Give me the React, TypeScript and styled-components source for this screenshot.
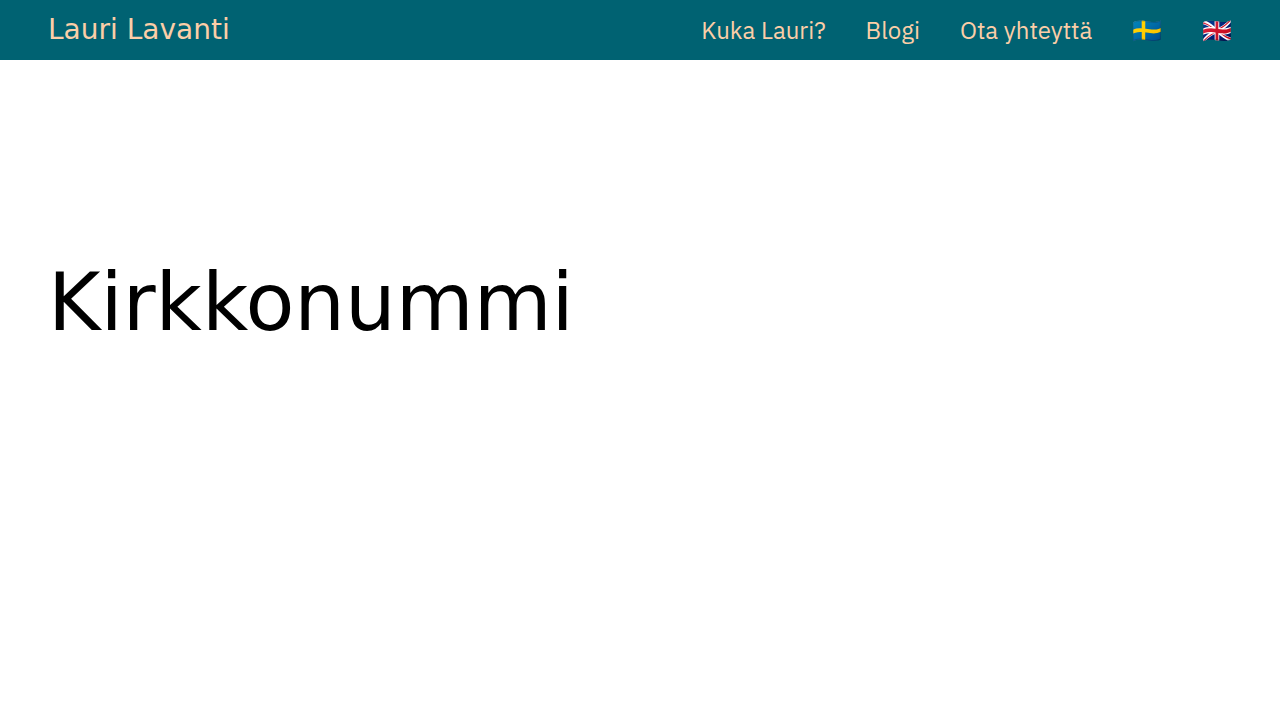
import React from "react";
import styled, { createGlobalStyle } from "styled-components";

const GlobalStyle = createGlobalStyle`
  body { margin: 0; background: #fff; color: #000; }
`;
const Header = styled.header`
  display: flex;
  align-items: center;
  justify-content: space-between;
  height: 60px;
  padding: 0 48px;
  background: #006272;
`;
const Brand = styled.a`
  color: #fbcea8;
  font: 28px/60px "DejaVu Sans", sans-serif;
  text-decoration: none;
`;
const Nav = styled.nav`
  display: flex;
  align-items: center;
  gap: 40px;
`;
const NavLink = styled.a`
  color: #fbcea8;
  font: 24px/30px "IBM Plex Sans", "Roboto", "Noto Color Emoji", sans-serif;
  text-decoration: none;
  white-space: nowrap;
`;
const Main = styled.main`
  padding: 195px 48px 0;
`;
const Title = styled.h1`
  margin: 0;
  font: 80px/96px "DejaVu Sans", sans-serif;
`;

export default function App() {
  return (
    <>
      <GlobalStyle />
      <Header>
        <Brand href="#">Lauri Lavanti</Brand>
        <Nav>
          <NavLink href="#kuka">Kuka Lauri?</NavLink>
          <NavLink href="#blogi">Blogi</NavLink>
          <NavLink href="#yhteys">Ota yhteyttä</NavLink>
          <NavLink href="#sv">🇸🇪</NavLink>
          <NavLink href="#en">🇬🇧</NavLink>
        </Nav>
      </Header>
      <Main>
        <Title>Kirkkonummi</Title>
      </Main>
    </>
  );
}
